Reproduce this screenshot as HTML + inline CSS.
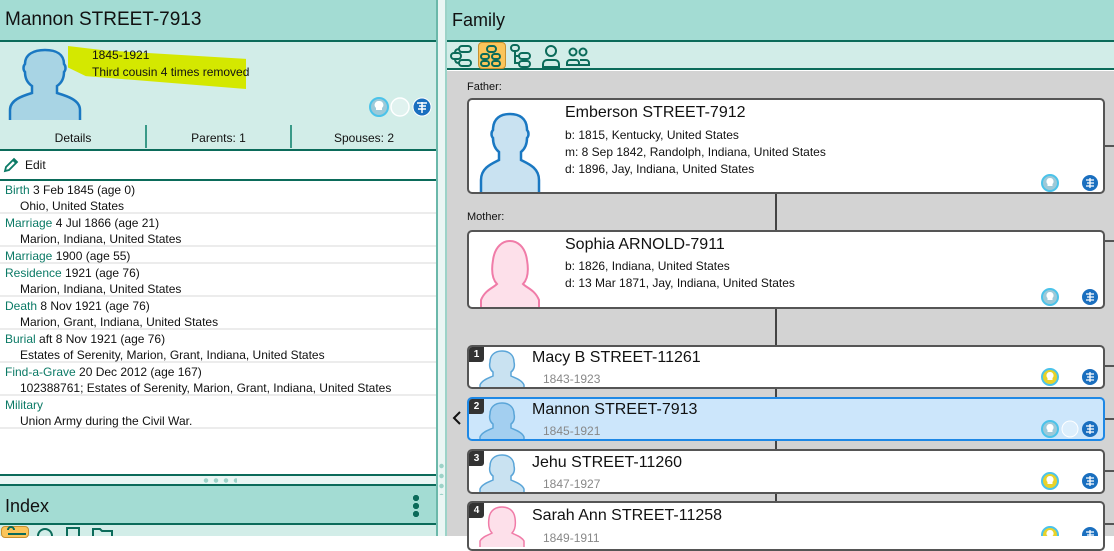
<!DOCTYPE html>
<html><head><meta charset="utf-8"><style>
*{box-sizing:border-box;margin:0;padding:0}
body{width:1114px;height:536px;overflow:hidden;position:relative;font-family:"Liberation Sans",sans-serif;font-size:12px;color:#111;background:#fff}
.a{position:absolute}
.hdr{background:#a3dcd3;border-bottom:2px solid #0b6b5a}
.fact{position:absolute;left:0;width:436px;border-bottom:2px solid #ececec;padding:1px 0 0 5px;line-height:16px}
.fact b{font-weight:normal;color:#0b7a66}
.fact div{padding-left:15px}
.card{position:absolute;left:467px;width:638px;background:#fff;border:2px solid #555;border-radius:5px;overflow:hidden}
.num{position:absolute;left:0;top:0;width:15px;height:15px;background:#333;color:#fff;font-size:10px;font-weight:bold;text-align:center;line-height:15px;border-radius:0 0 3px 0}
.nm{position:absolute;font-size:16px}
.yr{position:absolute;font-size:12px;color:#888}
.hl{position:absolute;width:10px;height:2px;background:#555;left:1104px}
</style></head><body>
<!-- left pane -->
<div class="a hdr" style="left:0;top:0;width:437px;height:42px"><div class="a" style="left:5px;top:9px;font-size:19px">Mannon STREET-7913</div></div>
<div class="a" style="left:0;top:42px;width:437px;height:109px;background:#d2ede8;border-bottom:2px solid #0b6b5a"></div>
<svg class="a" style="left:8px;top:48px" width="76" height="72" viewBox="0 0 76 72"><path d="M2 72 V62 C2 52 14 48 24 45 V38 C18 34 17 28 17 24 C15 22 15 18 17 16 C17 6 26 2 37 2 C48 2 56 6 56 16 C58 18 58 22 56 24 C56 28 55 34 49 38 V45 C59 48 72 52 72 62 V72" fill="#a8d4e4" stroke="#1a78c2" stroke-width="2.5"/></svg>
<div class="a" style="left:68px;top:46px;width:178px;height:43px;background:#d4e800;clip-path:polygon(0 0,20% 10%,100% 30%,100% 100%,10% 70%,0 50%)"></div>
<div class="a" style="left:92px;top:47px;line-height:17px">1845-1921<br>Third cousin 4 times removed</div>
<svg class="a" style="left:369px;top:97px" width="64" height="20"><circle cx="10" cy="10" r="9" fill="#9dc9d8" stroke="#4bc3ea" stroke-width="2"/><path d="M10 4a4 4 0 0 0-3 7v2h6v-2a4 4 0 0 0-3-7z" fill="#fff"/><circle cx="31" cy="10" r="9" fill="#e0f2ef" stroke="#fff" stroke-width="1.5"/><circle cx="53" cy="10" r="9" fill="#1a6fbf" stroke="#fff"/><path d="M48 6h10M50 9h7M49 12h8M53 5v11" stroke="#fff" stroke-width="1.5"/></svg>
<div class="a" style="left:0;top:131px;width:437px;text-align:center;font-size:12px">
<span class="a" style="left:0;width:146px">Details</span><span class="a" style="left:146px;width:145px">Parents: 1</span><span class="a" style="left:291px;width:146px">Spouses: 2</span></div>
<div class="a" style="left:145px;top:125px;width:2px;height:23px;background:#3a9a88"></div>
<div class="a" style="left:290px;top:125px;width:2px;height:23px;background:#3a9a88"></div>
<svg class="a" style="left:3px;top:157px" width="16" height="16"><path d="M2 14 L3 10 L11 2 L14 5 L6 13 Z M10 3 L13 6" fill="none" stroke="#0b7a66" stroke-width="1.8"/></svg>
<div class="a" style="left:25px;top:158px">Edit</div>
<div class="a" style="left:0;top:179px;width:437px;height:2px;background:#0b6b5a"></div>
<div class="fact" style="top:181px;height:33px"><b>Birth</b> 3 Feb 1845 (age 0)<div>Ohio, United States</div></div>
<div class="fact" style="top:214px;height:33px"><b>Marriage</b> 4 Jul 1866 (age 21)<div>Marion, Indiana, United States</div></div>
<div class="fact" style="top:247px;height:17px"><b>Marriage</b> 1900 (age 55)</div>
<div class="fact" style="top:264px;height:33px"><b>Residence</b> 1921 (age 76)<div>Marion, Indiana, United States</div></div>
<div class="fact" style="top:297px;height:33px"><b>Death</b> 8 Nov 1921 (age 76)<div>Marion, Grant, Indiana, United States</div></div>
<div class="fact" style="top:330px;height:33px"><b>Burial</b> aft 8 Nov 1921 (age 76)<div>Estates of Serenity, Marion, Grant, Indiana, United States</div></div>
<div class="fact" style="top:363px;height:33px"><b>Find-a-Grave</b> 20 Dec 2012 (age 167)<div>102388761; Estates of Serenity, Marion, Grant, Indiana, United States</div></div>
<div class="fact" style="top:396px;height:33px"><b>Military</b><div>Union Army during the Civil War.</div></div>
<div class="a" style="left:0;top:474px;width:437px;height:10px;background:#eaf6f4;border-top:2px solid #0b6b5a"></div>
<div class="a" style="left:201px;top:478px;width:36px;height:5px;background:radial-gradient(circle,#9cd3c8 2px,transparent 2.5px) 0 0/10px 5px"></div>
<div class="a hdr" style="left:0;top:484px;width:437px;height:41px;border-top:2px solid #0b6b5a"><div class="a" style="left:5px;top:10px;font-size:18px">Index</div>
<div class="a" style="left:413px;top:8px;width:6px;height:24px;background:radial-gradient(circle,#0b6b5a 3px,transparent 3.2px) 0 0/6px 8px"></div></div>
<div class="a" style="left:0;top:525px;width:437px;height:11px;background:#d2ede8"></div>
<div class="a" style="left:1px;top:526px;width:28px;height:12px;background:#fbc55a;border:1px solid #c89030;border-radius:4px"></div>
<svg class="a" style="left:0;top:526px" width="130" height="10" fill="none" stroke="#0b6b5a" stroke-width="2"><path d="M8 8h18M8 4a3 3 0 1 1 6 0"/><circle cx="45" cy="10" r="7"/><rect x="67" y="2" width="12" height="12"/><path d="M93 10V3h7l2 2h10v5"/></svg>
<div class="a" style="left:436px;top:0;width:2px;height:536px;background:#6bb8aa"></div>
<!-- splitter -->
<div class="a" style="left:438px;top:0;width:8px;height:536px;background:#eaf6f4"></div>
<div class="a" style="left:439px;top:461px;width:5px;height:34px;background:radial-gradient(circle,#9cd3c8 2px,transparent 2.5px) 0 0/5px 10px"></div>
<div class="a" style="left:445px;top:0;width:2px;height:536px;background:#9cd3c8"></div>
<!-- right pane -->
<div class="a hdr" style="left:447px;top:0;width:667px;height:42px"><div class="a" style="left:5px;top:10px;font-size:18px">Family</div></div>
<div class="a" style="left:447px;top:42px;width:667px;height:28px;background:#d2ede8;border-bottom:2px solid #0b6b5a"></div>
<div class="a" style="left:478px;top:42px;width:28px;height:27px;background:#fbc55a;border:1px solid #c89030;border-radius:4px"></div>
<svg class="a" style="left:449px;top:43px" width="150" height="26" fill="none" stroke="#0b6b5a" stroke-width="2">
<rect x="10" y="3" width="12" height="6" rx="3"/><rect x="2" y="10" width="10" height="6" rx="3"/><rect x="10" y="17" width="12" height="6" rx="3"/><path d="M10 6 Q6 6 6 10 M6 16 Q6 20 10 20"/>
<rect x="38" y="3" width="9" height="6" rx="3"/><rect x="32" y="11" width="8" height="5" rx="2.5"/><rect x="43" y="11" width="8" height="5" rx="2.5"/><rect x="32" y="18" width="8" height="5" rx="2.5"/><rect x="43" y="18" width="8" height="5" rx="2.5"/>
<rect x="62" y="2" width="8" height="6" rx="3"/><rect x="70" y="10" width="11" height="6" rx="3"/><rect x="70" y="18" width="11" height="6" rx="3"/><path d="M66 8v12h4M66 13h4"/>
<circle cx="102" cy="8" r="5"/><path d="M94 24v-3a4 4 0 0 1 4-4h8a4 4 0 0 1 4 4v3z"/>
<circle cx="124" cy="9" r="3.5"/><circle cx="134" cy="9" r="3.5"/><path d="M118 22v-2a3 3 0 0 1 3-3h6a3 3 0 0 1 3 3v2zM130 22h10v-2a3 3 0 0 0-3-3h-6"/></svg>
<div class="a" style="left:447px;top:71px;width:667px;height:465px;background:#d3d3d3"></div>
<div class="a" style="left:775px;top:193px;width:2px;height:343px;background:#444"></div>
<div class="hl" style="top:145px"></div><div class="hl" style="top:240px"></div><div class="hl" style="top:365px"></div><div class="hl" style="top:418px"></div><div class="hl" style="top:470px"></div><div class="hl" style="top:523px"></div>
<div class="a" style="left:467px;top:81px;font-size:11px">Father:</div>
<div class="card" style="top:98px;height:96px">
<svg class="a" style="left:10px;top:10px" width="62" height="82" viewBox="0 0 62 82"><path d="M2 82V70C2 58 12 54 20 50V42C15 38 14 32 14 28C12 26 12 22 14 20C14 8 22 4 31 4C40 4 48 8 48 20C50 22 50 26 48 28C48 32 47 38 42 42V50C50 54 60 58 60 70V82" fill="#c9e2f1" stroke="#1a78c2" stroke-width="2.5"/></svg>
<div class="nm" style="left:96px;top:4px">Emberson STREET-7912</div>
<div class="a" style="left:96px;top:27px;line-height:17px">b: 1815, Kentucky, United States<br>m: 8 Sep 1842, Randolph, Indiana, United States<br>d: 1896, Jay, Indiana, United States</div>
</div>
<div class="a" style="left:467px;top:211px;font-size:11px">Mother:</div>
<div class="card" style="top:230px;height:79px">
<svg class="a" style="left:10px;top:6px" width="62" height="72" viewBox="0 0 62 72"><path d="M2 72V62C6 52 14 50 18 46C14 42 12 34 14 22C16 8 24 3 31 3C38 3 46 8 48 22C50 34 48 42 44 46C48 50 56 52 60 62V72" fill="#fde0ea" stroke="#f07ca8" stroke-width="2"/></svg>
<div class="nm" style="left:96px;top:4px">Sophia ARNOLD-7911</div>
<div class="a" style="left:96px;top:26px;line-height:17px">b: 1826, Indiana, United States<br>d: 13 Mar 1871, Jay, Indiana, United States</div>
</div>
<div class="card" style="top:345px;height:44px"><svg class="a" style="left:10px;top:2px" width="46" height="42" viewBox="0 0 46 42"><path d="M1 42V36C3 31 10 29 14 27V23C11 21 10 17 11 13C11 6 16 2 23 2C30 2 35 6 35 13C36 17 35 21 32 23V27C36 29 43 31 45 36V42" fill="#c9e2f1" stroke="#5aa5d8" stroke-width="1.5"/></svg><div class="num">1</div><div class="nm" style="left:63px;top:2px">Macy B STREET-11261</div><div class="yr" style="left:74px;top:25px">1843-1923</div></div>
<div class="card" style="top:397px;height:44px;background:#cce6fb;border-color:#1e88e5"><svg class="a" style="left:10px;top:2px" width="46" height="42" viewBox="0 0 46 42"><path d="M1 42V36C3 31 10 29 14 27V23C11 21 10 17 11 13C11 6 16 2 23 2C30 2 35 6 35 13C36 17 35 21 32 23V27C36 29 43 31 45 36V42" fill="#a3cff0" stroke="#5aa5d8" stroke-width="1.5"/></svg><div class="num">2</div><div class="nm" style="left:63px;top:2px">Mannon STREET-7913</div><div class="yr" style="left:74px;top:25px">1845-1921</div></div>
<div class="card" style="top:449px;height:45px"><svg class="a" style="left:10px;top:2px" width="46" height="42" viewBox="0 0 46 42"><path d="M1 42V36C3 31 10 29 14 27V23C11 21 10 17 11 13C11 6 16 2 23 2C30 2 35 6 35 13C36 17 35 21 32 23V27C36 29 43 31 45 36V42" fill="#c9e2f1" stroke="#5aa5d8" stroke-width="1.5"/></svg><div class="num">3</div><div class="nm" style="left:63px;top:3px">Jehu STREET-11260</div><div class="yr" style="left:74px;top:26px">1847-1927</div></div>
<div class="card" style="top:501px;height:50px"><svg class="a" style="left:10px;top:2px" width="46" height="42" viewBox="0 0 46 42"><path d="M1 42V36C4 31 10 30 13 28C10 25 9 20 10 13C11 5 17 2 23 2C29 2 35 5 36 13C37 20 36 25 33 28C36 30 42 31 45 36V42" fill="#fde0ea" stroke="#f07ca8" stroke-width="1.5"/></svg><div class="num">4</div><div class="nm" style="left:63px;top:4px">Sarah Ann STREET-11258</div><div class="yr" style="left:74px;top:28px">1849-1911</div></div>
<!-- card icons -->
<svg class="a" style="left:1040px;top:174px" width="62" height="362">
<defs><g id="b"><circle cx="10" cy="9" r="8" fill="#9dc9d8" stroke="#4bc3ea" stroke-width="2"/><path d="M10 4a3.5 3.5 0 0 0-2.5 6v2h5v-2A3.5 3.5 0 0 0 10 4z" fill="#fff"/></g><g id="y"><circle cx="10" cy="9" r="8" fill="#e8d22a" stroke="#4bc3ea" stroke-width="2"/><path d="M10 4a3.5 3.5 0 0 0-2.5 6v2h5v-2A3.5 3.5 0 0 0 10 4z" fill="#fff"/></g><g id="t"><circle cx="50" cy="9" r="8" fill="#1a6fbf"/><path d="M46 6h8M47 9h7M46 12h8M50 4v10" stroke="#fff" stroke-width="1.3"/></g></defs>
<use href="#b"/><use href="#t"/>
<use href="#b" y="114"/><use href="#t" y="114"/>
<use href="#y" y="194"/><use href="#t" y="194"/>
<use href="#b" y="246"/><use href="#t" y="246"/><circle cx="30" cy="255" r="8" fill="#dceefc" stroke="#fff"/>
<use href="#y" y="298"/><use href="#t" y="298"/>
<use href="#y" y="352"/><use href="#t" y="352"/>
</svg>
<svg class="a" style="left:452px;top:411px" width="10" height="14"><path d="M8 1L2 7L8 13" fill="none" stroke="#111" stroke-width="2"/></svg>
</body></html>
